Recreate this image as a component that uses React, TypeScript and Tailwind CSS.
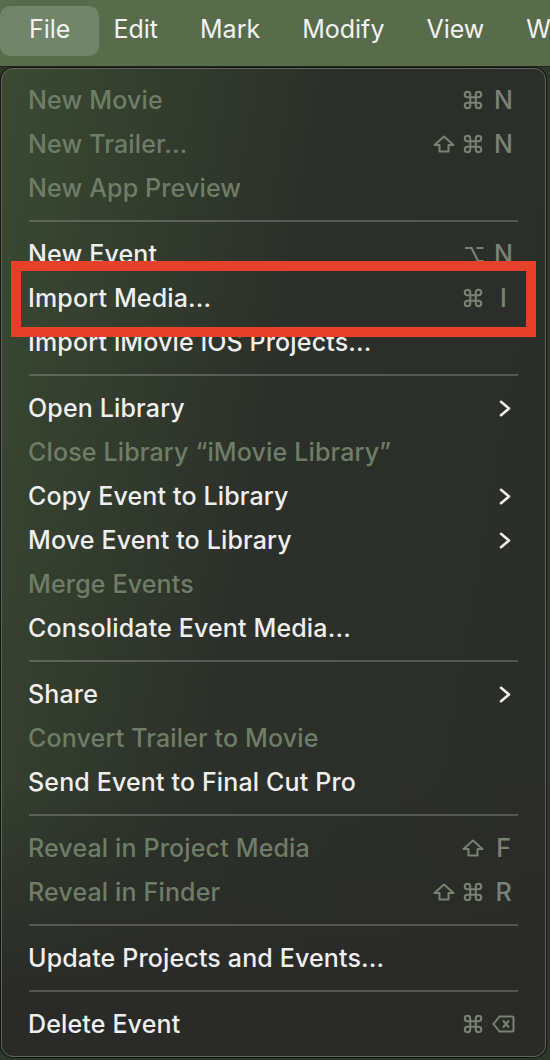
import React from 'react';

type Mod = 'cmd' | 'shift' | 'opt';

interface MenuItem {
  label: string;
  disabled?: boolean;
  mods?: Mod[];
  keyChar?: string;
  submenu?: boolean;
}

const sections: MenuItem[][] = [
  [
    { label: 'New Movie', disabled: true, mods: ['cmd'], keyChar: 'N' },
    { label: 'New Trailer...', disabled: true, mods: ['shift', 'cmd'], keyChar: 'N' },
    { label: 'New App Preview', disabled: true },
  ],
  [
    { label: 'New Event', mods: ['opt'], keyChar: 'N' },
    { label: 'Import Media...', mods: ['cmd'], keyChar: 'I' },
    { label: 'Import iMovie iOS Projects...' },
  ],
  [
    { label: 'Open Library', submenu: true },
    { label: 'Close Library “iMovie Library”', disabled: true },
    { label: 'Copy Event to Library', submenu: true },
    { label: 'Move Event to Library', submenu: true },
    { label: 'Merge Events', disabled: true },
    { label: 'Consolidate Event Media...' },
  ],
  [
    { label: 'Share', submenu: true },
    { label: 'Convert Trailer to Movie', disabled: true },
    { label: 'Send Event to Final Cut Pro' },
  ],
  [
    { label: 'Reveal in Project Media', disabled: true, mods: ['shift'], keyChar: 'F' },
    { label: 'Reveal in Finder', disabled: true, mods: ['shift', 'cmd'], keyChar: 'R' },
  ],
  [{ label: 'Update Projects and Events...' }],
  [{ label: 'Delete Event', mods: ['cmd'], keyChar: 'del' }],
];

function CmdIcon() {
  return (
    <svg width="22" height="22" viewBox="0 0 24 24" fill="none" stroke="currentColor" strokeWidth="2.2">
      <path d="M15 6v12a3 3 0 1 0 3-3H6a3 3 0 1 0 3 3V6a3 3 0 1 0-3 3h12a3 3 0 1 0-3-3" />
    </svg>
  );
}

function ShiftIcon() {
  return (
    <svg width="22" height="18" viewBox="0 0 22 18" fill="none" stroke="currentColor" strokeWidth="2" strokeLinejoin="round">
      <path d="M11 1.5 L20.5 10 H15.5 V16.5 H6.5 V10 H1.5 Z" />
    </svg>
  );
}

function OptIcon() {
  return (
    <svg width="20" height="17" viewBox="0 0 20 17" fill="none" stroke="currentColor" strokeWidth="2.2">
      <path d="M1 2H7.5L14 15H19.5M12.5 2H19.5" />
    </svg>
  );
}

function DeleteIcon() {
  return (
    <svg width="23" height="18" viewBox="0 0 23 18" fill="none" stroke="currentColor" strokeWidth="2" strokeLinejoin="round">
      <path d="M7.5 1.5H20a1.5 1.5 0 0 1 1.5 1.5V15a1.5 1.5 0 0 1-1.5 1.5H7.5L1.5 9Z" />
      <path d="M11 5.5l6 7M17 5.5l-6 7" />
    </svg>
  );
}

function Chevron() {
  return (
    <svg width="12" height="17" viewBox="0 0 12 17" fill="none" stroke="currentColor" strokeWidth="2.6" strokeLinecap="round" strokeLinejoin="round">
      <path d="M2 1.8 L10 8.5 L2 15.2" />
    </svg>
  );
}

const modIcon = (m: Mod) => {
  if (m === 'cmd') return <CmdIcon key={m} />;
  if (m === 'shift') return <ShiftIcon key={m} />;
  return <OptIcon key={m} />;
};

function Row({ item }: { item: MenuItem }) {
  return (
    <div className="flex h-[44px] items-center">
      <span
        className={`-ml-[1px] flex-1 whitespace-nowrap tracking-[0.15px] ${
          item.disabled ? 'text-[#6f7d66]' : 'text-[#efefef]'
        }`}
      >
        {item.label}
      </span>
      {item.keyChar && (
        <div className="flex items-center text-[#7a8273]">
          <div className="flex items-center gap-[7px]">{item.mods?.map(modIcon)}</div>
          <div className="ml-[5px] flex w-[29px] justify-center">
            {item.keyChar === 'del' ? <DeleteIcon /> : <span>{item.keyChar}</span>}
          </div>
        </div>
      )}
      {item.submenu && (
        <div className="pr-[7px] text-[#efefef]">
          <Chevron />
        </div>
      )}
    </div>
  );
}

export default function App() {
  const topItems = ['Edit', 'Mark', 'Modify', 'View', 'W'];

  return (
    <div className="relative h-[1060px] w-[550px] overflow-hidden bg-[#2d372a] text-[25px] font-medium leading-none [font-family:Inter,'Noto_Sans',sans-serif]">
      {/* menu bar */}
      <div className="flex h-[67px] items-start overflow-hidden border-b border-[#1f251c] bg-[#586c4c] pt-[6px] font-normal text-[#f2f2f2]">
        <div className="flex h-[50px] items-center rounded-[10px] bg-[#71856a] px-[29px] pb-[3px]">File</div>
        <div className="ml-[14px] flex h-[50px] items-center gap-[42px] whitespace-nowrap pb-[3px]">
          {topItems.map((t) => (
            <span key={t}>{t}</span>
          ))}
        </div>
      </div>

      {/* dropdown */}
      <div className="ml-[1px] mt-[1px] w-[545px] rounded-[12px] border border-[#60665a] bg-[linear-gradient(180deg,rgba(42,43,40,0)_72%,#2a2b28_93%),linear-gradient(100deg,#3a4a32_0%,#333d2e_22%,#2c302a_45%,#2a2c29_100%)] px-[27px] pb-[10px] pt-[9px] shadow-[0_0_0_1px_#121411]">
        {sections.map((sec, i) => (
          <div key={i}>
            {i > 0 && (
              <div className="flex h-[22px] items-center">
                <div className="h-[2px] w-full bg-white/20" />
              </div>
            )}
            {sec.map((item) => (
              <Row key={item.label} item={item} />
            ))}
          </div>
        ))}
      </div>

      {/* highlight box */}
      <div className="absolute left-[11px] top-[261px] h-[76px] w-[525px] border-[10px] border-[#e6402b]" />
    </div>
  );
}
